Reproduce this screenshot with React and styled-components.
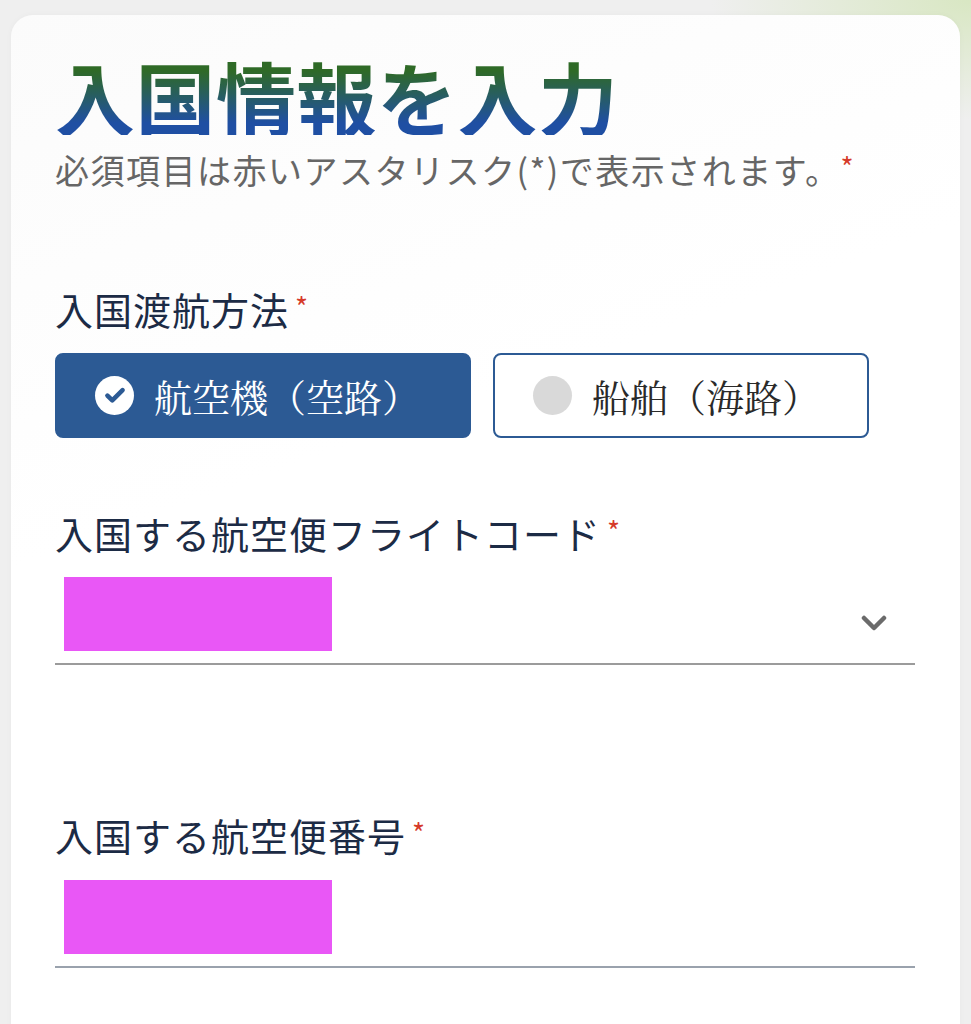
import React from "react";
import styled, { createGlobalStyle } from "styled-components";

const Global = createGlobalStyle`
  html, body { margin: 0; padding: 0; }
  body {
    background: #efefef;
    font-family: "Noto Sans CJK JP", "Noto Sans", sans-serif;
    overflow: hidden;
  }
`;

const Page = styled.div`
  min-height: 1024px;
  padding: 15px 11px 0 11px;
  background:
    radial-gradient(ellipse 260px 120px at 100% 0%, rgba(214, 230, 190, 0.9), rgba(230, 238, 220, 0) 100%),
    #efefef;
  box-sizing: border-box;
`;

const Card = styled.main`
  background: linear-gradient(160deg, #fbfbfb 0%, #ffffff 40%);
  border-radius: 22px;
  min-height: 1040px;
  padding: 40px 45px 0 44px;
  box-sizing: border-box;
  box-shadow: 0 0 6px rgba(0, 0, 0, 0.03);
`;

const Title = styled.h1`
  margin: 0;
  font-size: 80px;
  line-height: 1;
  font-weight: 700;
  letter-spacing: 0.5px;
  display: inline-block;
  background: linear-gradient(to bottom, #2f6a27 20%, #1f4fa3 85%);
  -webkit-background-clip: text;
  background-clip: text;
  color: transparent;
`;

const Subtitle = styled.p`
  margin: 13px 0 0 0;
  font-size: 34px;
  line-height: 1.3;
  color: #666;
  letter-spacing: 1.5px;
`;

const Req = styled.span`
  color: #d63a2a;
  font-size: ${(p) => p.$size || 28}px;
  vertical-align: ${(p) => p.$raise || 7}px;
  margin-left: ${(p) => p.$gap ?? 6}px;
`;

const Field = styled.section`
  margin-top: ${(p) => p.$top}px;
`;

const Label = styled.div`
  font-size: 38px;
  line-height: 1.2;
  color: #1c2b45;
  letter-spacing: 1px;
`;

const ChoiceRow = styled.div`
  display: flex;
  gap: 22px;
  margin-top: 21px;
`;

const Choice = styled.button`
  display: flex;
  align-items: center;
  gap: 20px;
  height: 85px;
  width: ${(p) => p.$w}px;
  box-sizing: border-box;
  border-radius: 8px;
  border: 2px solid #2c5a94;
  padding: 0 0 0 ${(p) => p.$pl}px;
  background: ${(p) => (p.$on ? "#2c5a94" : "#ffffff")};
  color: ${(p) => (p.$on ? "#ffffff" : "#2a2a2a")};
  font-family: "Liberation Serif", "Noto Serif CJK JP", serif;
  font-size: 38px;
  cursor: pointer;
`;

const Dot = styled.span`
  width: 39px;
  height: 39px;
  border-radius: 50%;
  background: #d9d9d9;
  flex: none;
`;

const Check = styled.span`
  width: 39px;
  height: 39px;
  border-radius: 50%;
  background: #ffffff;
  flex: none;
  display: flex;
  align-items: center;
  justify-content: center;
`;

const InputBox = styled.div`
  display: flex;
  align-items: center;
  justify-content: space-between;
  border-bottom: 2px solid ${(p) => p.$line};
  padding: 22px 28px 12px 9px;
`;

const Masked = styled.div`
  width: 268px;
  height: 74px;
  background: #e957f6;
`;

const Chevron = styled.svg`
  margin-top: 18px;
`;

export default function App() {
  return (
    <>
      <Global />
      <Page>
        <Card>
          <Title>入国情報を入力</Title>
          <Subtitle>
            必須項目は赤いアスタリスク(*)で表示されます。
            <Req $size={28} $gap={0} $raise={6}>*</Req>
          </Subtitle>

          <Field $top={94}>
            <Label>
              入国渡航方法<Req>*</Req>
            </Label>
            <ChoiceRow>
              <Choice $on $w={416} $pl={38}>
                <Check>
                  <svg width="26" height="26" viewBox="0 0 24 24">
                    <path d="M5 12.5l4.5 4.5L19 7.5" fill="none" stroke="#2c5a94" strokeWidth="4.2" strokeLinecap="round" strokeLinejoin="round" />
                  </svg>
                </Check>
                航空機（空路）
              </Choice>
              <Choice $w={376} $pl={38}>
                <Dot />
                船舶（海路）
              </Choice>
            </ChoiceRow>
          </Field>

          <Field $top={72}>
            <Label>
              入国する航空便フライトコード<Req>*</Req>
            </Label>
            <InputBox $line="#9b9b9b">
              <Masked />
              <Chevron width="26" height="16" viewBox="0 0 26 16">
                <path d="M3 3l10 10L23 3" fill="none" stroke="#6b6b6b" strokeWidth="4.5" strokeLinecap="round" strokeLinejoin="round" />
              </Chevron>
            </InputBox>
          </Field>

          <Field $top={147}>
            <Label>
              入国する航空便番号<Req>*</Req>
            </Label>
            <InputBox $line="#9aa2ad">
              <Masked />
            </InputBox>
          </Field>
        </Card>
      </Page>
    </>
  );
}
